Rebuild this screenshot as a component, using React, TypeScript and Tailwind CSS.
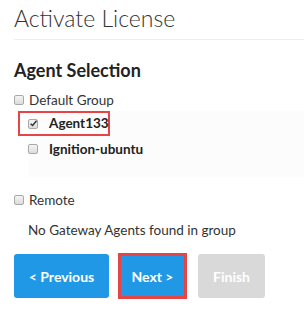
import React from 'react';

const font = { fontFamily: '"Lato", "Open Sans", sans-serif' };

function Box({ checked = false }: { checked?: boolean }) {
  return (
    <span className="relative inline-flex h-[10px] w-[10px] shrink-0 items-center justify-center rounded-[2px] border border-[#a9a9a9] bg-gradient-to-b from-[#f4f4f4] to-[#dcdcdc]">
      {checked && (
        <svg viewBox="0 0 10 10" className="absolute h-[9px] w-[9px]">
          <path d="M1.8 5.2 L4 7.3 L8.4 2" stroke="#333" strokeWidth="1.6" fill="none" />
        </svg>
      )}
    </span>
  );
}

export default function App() {
  return (
    <div className="h-[313px] w-[304px] overflow-hidden bg-white text-[#333]" style={font}>
      {/* Header */}
      <div className="pl-[14px]">
        <div className="flex h-[40px] items-end border-b border-[#eeeeee] pb-[6px]">
          <h1 className="text-[23px] font-light leading-[30px] text-[#333]">Activate License</h1>
        </div>
      </div>

      <div className="pl-[14px]">
        <h2 className="mt-[18px] h-[24px] text-[18px] font-bold leading-[24px] text-[#222]">Agent Selection</h2>

        {/* Default group */}
        <label className="mt-[8px] flex h-[20px] items-center gap-[5px] text-[13.5px]">
          <Box />
          <span>Default Group</span>
        </label>

        <div className="ml-[14px] mt-[1px] h-[66px] bg-[#fcfcfc]">
          <div className="-ml-[10px] flex h-[25px] w-[92px] items-center border-2 border-[#e64545] pl-[8px]">
            <Box checked />
            <span className="ml-[11px] text-[13.5px] font-bold text-[#222]">Agent133</span>
          </div>
          <div className="mt-[1px] flex h-[24px] items-center">
            <Box />
            <span className="ml-[11px] text-[13.5px] font-bold text-[#222]">Ignition-ubuntu</span>
          </div>
        </div>

        {/* Remote */}
        <label className="mt-[13px] flex h-[20px] items-center gap-[5px] text-[13.5px]">
          <Box />
          <span>Remote</span>
        </label>
        <p className="ml-[14px] mt-[10px] h-[20px] text-[13.5px] leading-[20px]">No Gateway Agents found in group</p>

        {/* Buttons */}
        <div className="mt-[13px] flex items-center">
          <button className="h-[44px] w-[95px] rounded-[3px] bg-[#2198e6] text-[14px] font-bold text-white">&lt; Previous</button>
          <div className="ml-[9px] border-[3px] border-[#e64545]">
            <button className="h-[40px] w-[63px] bg-[#2198e6] text-[14px] font-bold text-white">Next &gt;</button>
          </div>
          <button className="ml-[11px] h-[44px] w-[67px] rounded-[3px] bg-[#d9d9d9] text-[14px] font-bold text-white">Finish</button>
        </div>
      </div>
    </div>
  );
}
